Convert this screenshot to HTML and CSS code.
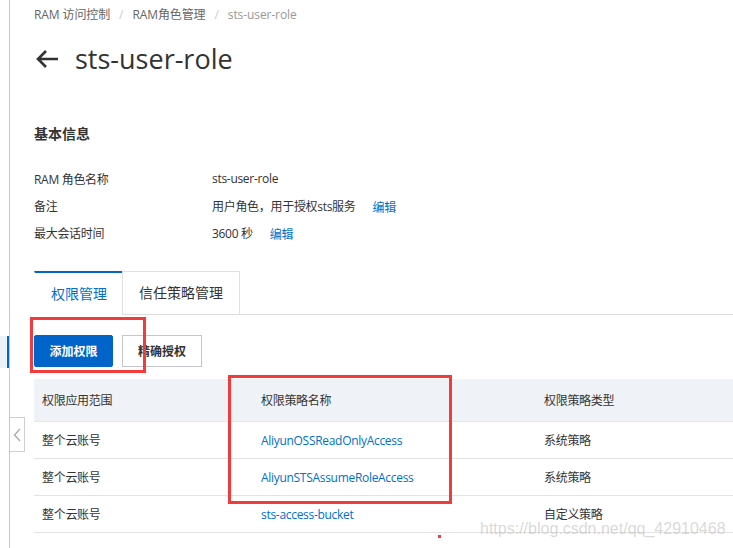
FILE: index.html
```html
<!DOCTYPE html>
<html lang="zh-CN">
<head>
<meta charset="utf-8">
<link rel="stylesheet" href="styles.css">
</head>
<body>
<div class="page">
  <aside class="sidebar">
    <div class="nav-active"></div>
  </aside>
  <main class="main">
    <nav class="crumbs">
      <span>RAM 访问控制</span><span class="sep">/</span><span>RAM角色管理</span><span class="sep">/</span><span class="cur">sts-user-role</span>
    </nav>
    <h1 class="title">
      <svg class="back" width="24" height="20" viewBox="0 0 24 20"><path d="M23 10H3M11 2L3 10l8 8" fill="none" stroke="#333" stroke-width="2.6"/></svg>
      <span>sts-user-role</span>
    </h1>
    <h2 class="section">基本信息</h2>
    <div class="info">
      <div class="row"><span class="label">RAM 角色名称</span><span class="value">sts-user-role</span></div>
      <div class="row"><span class="label">备注</span><span class="value">用户角色，用于授权sts服务</span><a class="edit">编辑</a></div>
      <div class="row"><span class="label">最大会话时间</span><span class="value">3600 秒</span><a class="edit">编辑</a></div>
    </div>
    <div class="tabs">
      <div class="tab active">权限管理</div>
      <div class="tab">信任策略管理</div>
    </div>
    <div class="actions">
      <button class="btn primary">添加权限</button>
      <button class="btn">精确授权</button>
    </div>
    <table class="grid">
      <thead>
        <tr><th class="c1">权限应用范围</th><th class="c2">权限策略名称</th><th>权限策略类型</th></tr>
      </thead>
      <tbody>
        <tr><td>整个云账号</td><td><a>AliyunOSSReadOnlyAccess</a></td><td>系统策略</td></tr>
        <tr><td>整个云账号</td><td><a>AliyunSTSAssumeRoleAccess</a></td><td>系统策略</td></tr>
        <tr><td>整个云账号</td><td><a>sts-access-bucket</a></td><td>自定义策略</td></tr>
      </tbody>
    </table>
  </main>
</div>
<div class="collapse"><svg width="8" height="14" viewBox="0 0 8 14"><path d="M7 1L1.5 7 7 13" fill="none" stroke="#aaa" stroke-width="1.3"/></svg></div>
<div class="mark mark-a"></div>
<div class="mark mark-b"></div>
<div class="dot"></div>
<div class="watermark">https://blog.csdn.net/qq_42910468</div>
</body>
</html>
```
FILE: styles.css
```css
html, body {
  margin: 0;
  padding: 0;
  height: 100%;
  overflow: hidden;
  background: #fff;
}
body {
  font-family: "Open Sans", "Noto Sans CJK SC", sans-serif;
  color: #333;
  font-size: 12px;
  letter-spacing: -0.3px;
}
.page {
  display: flex;
  min-height: 548px;
}
.sidebar {
  width: 9px;
  border-right: 1px solid #c9c9c9;
  padding-top: 336px;
  flex: none;
}
.nav-active {
  height: 32px;
  width: 7px;
  background: #edf2f9;
  border-right: 2px solid #0064c8;
}
.main {
  flex: 1;
  padding-left: 24px;
  min-width: 0;
}
.crumbs {
  padding-top: 6px;
  line-height: 18px;
  color: #666;
  font-size: 12px;
  letter-spacing: -0.1px;
}
.crumbs .sep {
  color: #ccc;
  margin: 0 9px;
}
.crumbs .cur {
  color: #999;
}
.title {
  margin: 17px 0 0;
  display: flex;
  align-items: center;
  gap: 16px;
  font-size: 27px;
  font-weight: 400;
  line-height: 36px;
  color: #333;
  letter-spacing: 0;
}
.back {
  margin-left: 1px;
}
.section {
  margin: 47px 0 0;
  font-size: 14px;
  font-weight: 700;
  line-height: 20px;
  color: #333;
  letter-spacing: 0;
}
.info {
  margin-top: 21px;
}
.row {
  display: flex;
  align-items: center;
  height: 27px;
}
.label {
  width: 178px;
  flex: none;
}
.edit {
  color: #0070cc;
  margin-left: 17px;
  position: relative;
  top: 1px;
}
.tabs {
  margin-top: 25px;
  display: flex;
  border-bottom: 1px solid #ddd;
  height: 43px;
}
.tab {
  font-size: 14px;
  line-height: 41px;
  padding: 0 16px;
  border: 1px solid #e1e1e1;
  border-bottom: none;
  color: #333;
  background: #fff;
  letter-spacing: 0;
}
.tab.active {
  color: #0070cc;
  border-top: 2px solid #0064c8;
  border-left-color: transparent;
  border-right: none;
  height: 43px;
  margin-bottom: -1px;
  padding: 0 15px 0 16px;
}
.actions {
  margin-top: 20px;
  display: flex;
  gap: 9px;
}
.btn {
  height: 32px;
  width: 80px;
  font-family: inherit;
  font-size: 12px;
  border: 1px solid #c4c6cf;
  background: #fff;
  color: #333;
  padding: 0;
  font-weight: 700;
}
.btn.primary {
  width: 79px;
  background: #0064c8;
  border-color: #0064c8;
  color: #fff;
  border-radius: 2px;
}
.grid {
  margin-top: 12px;
  width: 720px;
  border-collapse: collapse;
  font-size: 12px;
}
.grid th {
  background: #eff3f8;
  font-weight: 400;
  text-align: left;
  height: 42px;
  padding: 0 8px;
  border-bottom: 1px solid #e3e5e8;
}
.grid td {
  height: 36px;
  padding: 0 8px;
  border-bottom: 1px solid #e3e3e3;
}
.grid .c1 {
  width: 203px;
}
.grid .c2 {
  width: 267px;
}
.grid a {
  color: #0070cc;
}
.collapse {
  position: absolute;
  left: 10px;
  top: 417px;
  width: 14px;
  height: 33px;
  border: 1px solid #cfcfcf;
  border-left: none;
  background: #fff;
  display: flex;
  align-items: center;
  justify-content: center;
}
.mark {
  position: absolute;
  border: 3px solid #f23c3c;
  box-sizing: border-box;
}
.mark-a {
  left: 30px;
  top: 317px;
  width: 116px;
  height: 56px;
}
.mark-b {
  left: 228px;
  top: 375px;
  width: 224px;
  height: 129px;
}
.dot {
  position: absolute;
  left: 438px;
  top: 535px;
  width: 3px;
  height: 3px;
  background: #f23c3c;
}
.watermark {
  position: absolute;
  left: 480px;
  top: 520px;
  font-family: "Liberation Sans", sans-serif;
  font-size: 16px;
  letter-spacing: 0;
  color: rgba(170, 170, 170, 0.45);
  white-space: nowrap;
}
```
